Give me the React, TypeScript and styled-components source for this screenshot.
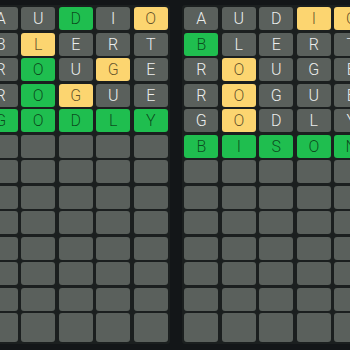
import React from 'react';
import styled, { createGlobalStyle } from 'styled-components';

type Mark = 'g' | 'y' | 'x';

const GlobalStyle = createGlobalStyle`
  html, body {
    margin: 0;
    padding: 0;
    background: #131618;
    overflow: hidden;
  }
  body {
    font-family: Roboto, "Noto Sans", "Liberation Sans", sans-serif;
  }
`;

const Page = styled.div`
  width: 350px;
  height: 350px;
  display: flex;
  justify-content: center;
  align-items: flex-start;
  padding: 5px 0 0 2px;
  box-sizing: border-box;
  overflow: hidden;
`;

const Boards = styled.div`
  display: flex;
  gap: 12.6px;
  flex-shrink: 0;
`;

const Board = styled.div`
  display: grid;
  grid-template-columns: repeat(5, 34px);
  grid-template-rows: repeat(12, 23px) 29px;
  column-gap: 3.5px;
  row-gap: 2.5px;
  padding: 2px;
  background: #1b1f1f;
  border-radius: 3px;
  flex-shrink: 0;
`;

const colours: Record<Mark, string> = {
  g: '#1fbe4f',
  y: '#fcd570',
  x: '#5a605c',
};

const Tile = styled.div<{ $mark: Mark }>`
  background: ${(p) => colours[p.$mark]};
  border-radius: 3px;
  display: flex;
  align-items: center;
  justify-content: center;
  font-size: 16px;
  font-weight: 300;
  color: ${(p) => (p.$mark === 'x' ? '#eceeed' : 'rgba(0, 0, 0, 0.62)')};
`;

const guesses = ['AUDIO', 'BLERT', 'ROUGE', 'ROGUE', 'GODLY', 'BISON'];

const leftMarks = ['xxgxy', 'xyxxx', 'xgxyx', 'xgyxx', 'ggggg'];
const rightMarks = ['xxxyy', 'gxxxx', 'xyxxx', 'xyxxx', 'xyxxx', 'ggggg'];

const ROWS = 13;

const GameBoard: React.FC<{ marks: string[] }> = ({ marks }) => (
  <Board>
    {Array.from({ length: ROWS }).map((_, r) =>
      Array.from({ length: 5 }).map((__, c) => {
        const row = marks[r];
        const mark = (row ? row[c] : 'x') as Mark;
        return (
          <Tile key={`${r}-${c}`} $mark={mark}>
            {row ? guesses[r][c] : ''}
          </Tile>
        );
      })
    )}
  </Board>
);

const App: React.FC = () => (
  <>
    <GlobalStyle />
    <Page>
      <Boards>
        <GameBoard marks={leftMarks} />
        <GameBoard marks={rightMarks} />
      </Boards>
    </Page>
  </>
);

export default App;
